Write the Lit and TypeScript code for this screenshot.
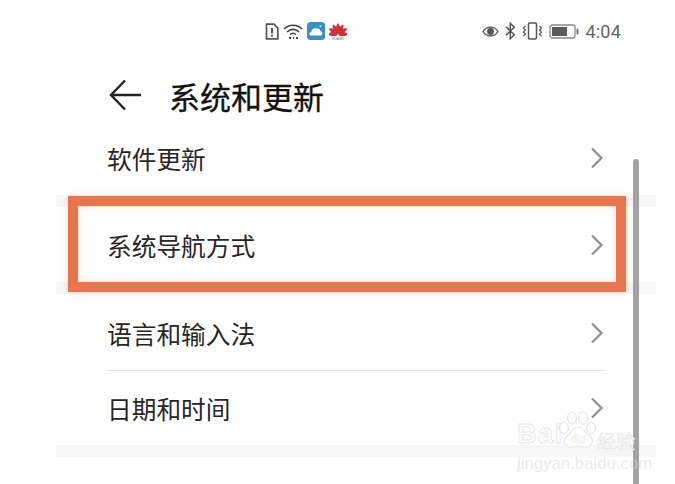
import { LitElement, html, css, svg } from "lit";
import { customElement } from "lit/decorators.js";

const chevron = html`<svg class="chev" width="14" height="22" viewBox="0 0 14 22"><path d="M2 1.5 L11.5 11 L2 20.5" fill="none" stroke="#8f8f8f" stroke-width="2.2"/></svg>`;

const petals = [0, 30, -30, 62, -62, 95, -95, 120, -120].map(
  (a) => svg`<path transform="rotate(${a} 9 11)" d="M9 11 C6.2 7 6.8 3 9 .5 C11.2 3 11.8 7 9 11Z" fill="#c8343c"/>`
);

@customElement("app-root")
export class AppRoot extends LitElement {
  static styles = css`
    :host {
      display: block;
      position: relative;
      width: 675px;
      height: 484px;
      overflow: hidden;
      background: #fff;
      font-family: "Noto Sans CJK SC", "Noto Sans", sans-serif;
      color: #222;
    }
    .status {
      height: 62px;
      display: flex;
      align-items: center;
      padding: 0 54px 0 265px;
    }
    .status svg { display: block; flex: none; }
    .left, .right { display: flex; align-items: center; }
    .left { gap: 4px; }
    .right { margin-left: auto; gap: 6px; }
    .time {
      font: 18px Roboto, "Liberation Sans", sans-serif;
      color: #666;
      letter-spacing: 0.2px;
    }
    .header {
      height: 70px;
      display: flex;
      align-items: center;
      gap: 27px;
      padding: 0 0 4px 109px;
      box-sizing: border-box;
    }
    .header h1 {
      margin: 0;
      font-size: 31px;
      font-weight: 400;
      line-height: 1;
      color: #111;
      -webkit-text-stroke: 0.3px #111;
    }
    .list { display: flex; flex-direction: column; }
    .row {
      display: flex;
      align-items: center;
      justify-content: space-between;
      padding: 0 71px 0 107px;
      font-size: 24.7px;
      color: #262626;
      box-sizing: border-box;
    }
    .first { height: 63px; padding-bottom: 12px; }
    .mid { height: 75px; }
    .third { height: 76px; padding-top: 2px; }
    .last { height: 74px; padding-bottom: 1px; }
    .band { height: 12px; margin: 0 19px 0 56px; background: #f7f7f7; }
    .rule { height: 1px; margin: 0 69px 0 107px; background: #e6e6e6; }
    .highlight {
      position: absolute;
      left: 68px;
      top: 196px;
      width: 558px;
      height: 96px;
      box-sizing: border-box;
      border: 10px solid #e6764f;
      box-shadow: 0 0 6px rgba(240, 150, 100, 0.45), inset 0 0 6px rgba(240, 150, 100, 0.45);
    }
    .scroll {
      position: absolute;
      left: 633px;
      top: 159px;
      bottom: 0;
      width: 6px;
      border-radius: 3px 3px 0 0;
      background: #a3a3a3;
    }
    .mark {
      position: absolute;
      left: 517px;
      top: 410px;
      width: 122px;
      color: #fff;
    }
    .brand { display: flex; align-items: flex-end; height: 40px; }
    .bai, .jy { line-height: 1; }
    .bai {
      font: 700 27px "Liberation Sans", sans-serif;
      width: 40px;
      letter-spacing: 1.6px;
      -webkit-text-stroke: 0.8px #e6e6e6;
    }
    .jy {
      font-size: 19px;
      margin-left: -2px;
      -webkit-text-stroke: 0.7px #e6e6e6;
    }
    .paw { display: block; flex: none; }
    .url {
      font: 16.8px "Liberation Sans", sans-serif;
      color: rgba(215, 215, 215, 0.55);
      margin-top: 4px;
      white-space: nowrap;
    }
    .logo { position: relative; width: 18px; height: 18px; }
    .hw {
      position: absolute;
      left: 0;
      right: 0;
      bottom: -1px;
      text-align: center;
      font: 3px "Liberation Sans", sans-serif;
      color: #9a6a6a;
    }
  `;

  render() {
    return html`
      <div class="status">
        <div class="left">
          <svg width="14" height="17" viewBox="0 0 14 17">
            <path d="M1.5 1.2 H9 L12.8 5 V15.8 H1.5Z" fill="none" stroke="#555" stroke-width="1.7"/>
            <path d="M7 5 V10.5 M7 12 V13.8" stroke="#444" stroke-width="1.8"/>
          </svg>
          <svg width="20" height="17" viewBox="0 0 20 17" fill="none" stroke="#444" stroke-width="1.6">
            <path d="M1 6 C6 1 14 1 19 6"/>
            <path d="M4 9 C7.5 5.5 12.5 5.5 16 9"/>
            <path d="M7 11.6 C8.8 10 11.2 10 13 11.6"/>
            <path d="M6 15 H8 M10 15 H11 M13 15 H15" stroke-width="2"/>
          </svg>
          <svg width="18" height="18" viewBox="0 0 18 18">
            <rect width="18" height="18" rx="3.5" fill="#3a8fc4"/>
            <path d="M4 13.5 C1.8 13.5 1.8 10 4.3 10 C4.6 7 7.4 5.6 9.6 6.8 C11 5.8 13.4 6.8 13.5 9.3 C16 9.5 16 13.5 13.5 13.5Z" fill="#fff"/>
            <circle cx="13.5" cy="4.3" r="1" fill="#bfe0f2"/>
          </svg>
          <div class="logo">
            <svg width="18" height="14" viewBox="0 0 18 13">${petals}</svg>
            <span class="hw">HUAWEI</span>
          </div>
        </div>
        <div class="right">
          <svg width="17" height="13" viewBox="0 0 17 13">
            <path d="M1 6.5 C4.5 .6 12.5 .6 16 6.5 C12.5 12.4 4.5 12.4 1 6.5Z" fill="none" stroke="#555" stroke-width="1.4"/>
            <circle cx="8.5" cy="6.5" r="3.4" fill="#555"/>
          </svg>
          <svg width="11" height="18" viewBox="0 0 11 18" fill="none" stroke="#555" stroke-width="1.5">
            <path d="M1 4.8 L9.3 12.8 L5.3 16.7 V1.3 L9.3 5.2 L1 13.2"/>
          </svg>
          <svg width="21" height="18" viewBox="0 0 21 18" fill="none" stroke="#555">
            <rect x="6.5" y="1" width="8" height="16" rx="1.2" stroke-width="1.5"/>
            <path d="M3.5 4 L1.5 6 L3.5 8 L1.5 10 L3.5 12 L1.5 14 M17.5 4 L19.5 6 L17.5 8 L19.5 10 L17.5 12 L19.5 14" stroke-width="1.2"/>
          </svg>
          <svg width="30" height="15" viewBox="0 0 30 15">
            <rect x="1" y="1" width="25" height="13" rx="2.5" fill="none" stroke="#888" stroke-width="1.3"/>
            <rect x="3" y="3" width="15" height="9" fill="#5a5a5a"/>
            <rect x="27.5" y="4.5" width="2" height="6" rx="1" fill="#777"/>
          </svg>
          <span class="time">4:04</span>
        </div>
      </div>

      <div class="header">
        <svg width="33" height="32" viewBox="0 0 33 32" fill="none" stroke="#222" stroke-width="2.4">
          <path d="M16 1.5 L2 16 L16 30.5 M2 16 H32"/>
        </svg>
        <h1>系统和更新</h1>
      </div>

      <div class="list">
        <div class="row first">软件更新${chevron}</div>
        <div class="band"></div>
        <div class="row mid">系统导航方式${chevron}</div>
        <div class="band"></div>
        <div class="row third">语言和输入法${chevron}</div>
        <div class="rule"></div>
        <div class="row last">日期和时间${chevron}</div>
        <div class="band"></div>
      </div>

      <div class="highlight"></div>
      <div class="scroll"></div>

      <div class="mark">
        <div class="brand">
          <span class="bai">Bai</span>
          <svg class="paw" width="42" height="40" viewBox="0 0 42 38" fill="#fff" stroke="#e6e6e6" stroke-width="1.2">
            <ellipse cx="7" cy="17" rx="4.5" ry="5.5"/>
            <ellipse cx="15" cy="7" rx="4.5" ry="6"/>
            <ellipse cx="26" cy="7" rx="4.5" ry="6"/>
            <ellipse cx="34" cy="17" rx="4.5" ry="5.5"/>
            <path d="M21 16 C27 16 28 22 33 25 C38 30 34 37 27 36 C23 35 19 35 15 36 C8 37 5 30 10 25 C15 22 15 16 21 16Z"/>
            <text x="21" y="32" text-anchor="middle" font-size="12" font-family="Liberation Sans" font-weight="700" stroke-width="0.5">du</text>
          </svg>
          <span class="jy">经验</span>
        </div>
        <div class="url">jingyan.baidu.com</div>
      </div>
    `;
  }
}
